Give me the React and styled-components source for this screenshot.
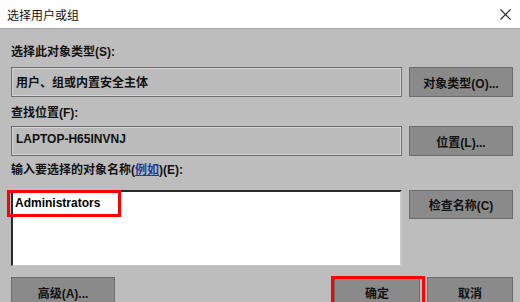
import React from 'react'
import styled, { createGlobalStyle } from 'styled-components'

const Global = createGlobalStyle`
  html, body { margin: 0; padding: 0; }
  body {
    width: 520px;
    height: 302px;
    overflow: hidden;
    background: #bdbdbd;
    font-family: "Liberation Sans", "Noto Sans CJK SC", sans-serif;
  }
`

const Dialog = styled.div`
  width: 520px;
  height: 302px;
  background: #bdbdbd;
  display: flex;
  flex-direction: column;
  overflow: hidden;
`

const TitleBar = styled.div`
  height: 28px;
  flex: none;
  background: #fff;
  border-bottom: 1px solid #a8a8a8;
  display: flex;
  align-items: center;
  justify-content: space-between;
  padding: 0 7px 0 7px;
  font-size: 12px;
  color: #111;
`

const Close = styled.span`
  display: flex;
  align-items: center;
  margin-right: 2px;
`

const Body = styled.div`
  padding: 15px 7px 0 11px;
  display: flex;
  flex-direction: column;
`

const Label = styled.div`
  font-size: 12px;
  font-weight: 700;
  line-height: 16px;
  height: 16px;
  margin-bottom: ${(p) => p.$gap}px;
  color: #111;
`

const Link = styled.span`
  color: #1b3c9c;
  text-decoration: underline;
`

const Row = styled.div`
  display: flex;
  gap: 7px;
  align-items: flex-start;
  margin-bottom: ${(p) => p.$gap}px;
`

const Field = styled.div`
  box-sizing: border-box;
  width: 391px;
  height: 30px;
  border: 1px solid #6e6e6e;
  box-shadow: inset 0 0 0 1px #d2d2d2;
  background: #bbbbbb;
  font-size: 12px;
  font-weight: 700;
  padding: 5px 0 0 4px;
  color: #111;
`

const NameBox = styled.div`
  position: relative;
  box-sizing: border-box;
  width: 391px;
  height: 76px;
  background: #fff;
  border-top: 2px solid #2a2a2a;
  border-left: 2px solid #2a2a2a;
  border-right: 2px solid #c8c8c8;
  border-bottom: 1px solid #c8c8c8;
  font-size: 12px;
  font-weight: 700;
  padding: 4px 0 0 2px;
  color: #000;
`

const Mark = styled.div`
  position: absolute;
  box-sizing: border-box;
  border: 3px solid #f00;
  left: ${(p) => p.$x}px;
  top: ${(p) => p.$y}px;
  width: ${(p) => p.$w}px;
  height: ${(p) => p.$h}px;
  pointer-events: none;
`

const Button = styled.div`
  box-sizing: border-box;
  width: ${(p) => p.$w || 104}px;
  height: ${(p) => p.$h || 30}px;
  flex: none;
  background: #8a8a8a;
  border: 1px solid #6c6c6c;
  display: flex;
  align-items: center;
  justify-content: center;
  font-size: 12px;
  font-weight: 700;
  color: #111;
`

const Footer = styled.div`
  display: flex;
  align-items: flex-start;
  padding-left: 11px;
  padding-right: 7px;
`

const Spacer = styled.div`
  flex: 1;
`

const OkWrap = styled.div`
  position: relative;
  margin-right: 7px;
`

export default function App() {
  return (
    <>
      <Global />
      <Dialog>
        <TitleBar>
          <span>选择用户或组</span>
          <Close>
            <svg width="11" height="11" viewBox="0 0 11 11">
              <path d="M0.5 0.5 L10.5 10.5 M10.5 0.5 L0.5 10.5" stroke="#222" strokeWidth="1.1" />
            </svg>
          </Close>
        </TitleBar>
        <Body>
          <Label $gap={7}>选择此对象类型(S):</Label>
          <Row $gap={8}>
            <Field>用户、组或内置安全主体</Field>
            <Button>对象类型(O)...</Button>
          </Row>
          <Label $gap={5}>查找位置(F):</Label>
          <Row $gap={6}>
            <Field>LAPTOP-H65INVNJ</Field>
            <Button>位置(L)...</Button>
          </Row>
          <Label $gap={12}>
            输入要选择的对象名称(<Link>例如</Link>)(E):
          </Label>
          <Row $gap={11}>
            <NameBox>
              Administrators
              <Mark $x={-6} $y={-2} $w={114} $h={27} />
            </NameBox>
            <Button $h={29}>检查名称(C)</Button>
          </Row>
        </Body>
        <Footer>
          <Button>高级(A)...</Button>
          <Spacer />
          <OkWrap>
            <Button $w={86}>确定</Button>
            <Mark $x={-3} $y={-1} $w={94} $h={40} />
          </OkWrap>
          <Button $w={86}>取消</Button>
        </Footer>
      </Dialog>
    </>
  )
}
